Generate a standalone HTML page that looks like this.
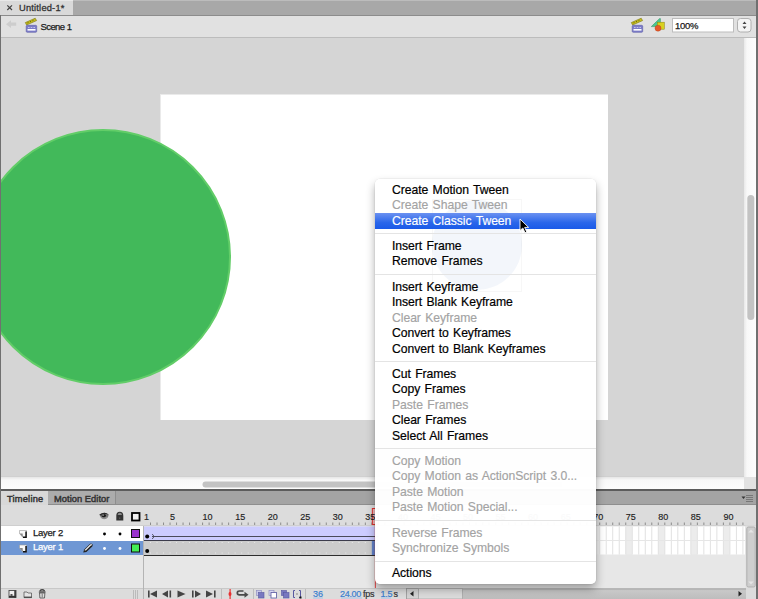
<!DOCTYPE html>
<html><head><meta charset="utf-8">
<style>
*{margin:0;padding:0;box-sizing:border-box}
html,body{width:758px;height:599px;overflow:hidden;background:#d5d5d5;font-family:"Liberation Sans",sans-serif;position:relative}
.a{position:absolute}
.t{position:absolute;white-space:nowrap;line-height:1}
/* top */
#tabbar{left:0;top:0;width:758px;height:16px;background:#a8a8a8;border-top:1px solid #bcbcbc;border-bottom:1px solid #8c8c8c}
#doctab{left:0;top:0;width:73px;height:15px;background:#d9d9d9;border-top:1px solid #e8e8e8}
#scenebar{left:0;top:16px;width:758px;height:22px;background:#e1e1e1;border-bottom:1px solid #bcbcbc}
#stagearea{left:1px;top:38px;width:744px;height:438px;background:#d5d5d5;overflow:hidden}
#stage{left:159px;top:56px;width:448px;height:326px;background:#fff;box-shadow:inset 1px 1px 0 #eaeaea}
#circle{left:-26.5px;top:91px;width:256px;height:256px;border-radius:50%;background:#42b95a;border:2px solid #62cd68}
#leftline{left:0;top:15px;width:1px;height:584px;background:#707070}
#rightline{left:756px;top:0;width:2px;height:599px;background:#707070}
#vscroll{left:745px;top:38px;width:11px;height:451px;background:#f7f7f7;border-left:1px solid #e2e2e2}
#hscroll{left:1px;top:476px;width:744px;height:13px;background:#fcfcfc;border-top:1px solid #d0d0d0}
#tlsep{left:0;top:489px;width:758px;height:2px;background:#5c5c5c}
#tltabs{left:1px;top:491px;width:755px;height:14px;background:#a4a4a4;border-bottom:1px solid #8e8e8e}
#tltab1{left:0;top:0;width:47px;height:14px;background:#d8d8d8}
#tltab2{left:47px;top:0;width:68px;height:13px;background:#acacac;border-right:1px solid #8e8e8e}
#tlhead{left:1px;top:505px;width:755px;height:21px;background:#dcdcdc;border-bottom:1px solid #cfcfcf}
#tlbody{left:1px;top:526px;width:755px;height:62px;background:#e7e7e7}
#tlfoot{left:1px;top:588px;width:755px;height:11px;background:#dcdcdc;border-top:1px solid #c8c8c8}
#framediv{left:143px;top:526px;width:1px;height:73px;background:#b4b4b4}
#row2{left:1px;top:526px;width:142px;height:15px;background:#fff}
#row1{left:1px;top:541px;width:142px;height:14px;background:#6f97d4}
/* menu */
#menu{left:375px;top:179px;width:221px;height:405px;background:rgba(255,255,255,0.975);border-radius:5px;box-shadow:0 0 0 0.5px rgba(0,0,0,0.07),0 5px 10px rgba(0,0,0,0.32)}
.mi{position:absolute;left:17px;font-size:12.2px;letter-spacing:-0.05px;word-spacing:1px;color:#000;white-space:nowrap;line-height:15px;-webkit-text-stroke:0.2px #000}
.dis{color:#a3a3a3;-webkit-text-stroke:0.15px #a3a3a3}
.hl{left:0;width:221px;height:16px;background:linear-gradient(#6b91f1,#2a66ea 60%,#1a5ae8)}
.sep{position:absolute;left:0;width:221px;height:1px;background:#e4e4e4}
.rl{top:512.5px;font-size:9px;color:#222;-webkit-text-stroke:0.15px currentColor}
.st{top:589.5px;font-size:9px;color:#333;-webkit-text-stroke:0.2px currentColor}
.sm{font-size:9.5px;color:#1a1a1a;-webkit-text-stroke:0.25px currentColor}
</style></head><body>
<div id="tabbar" class="a"></div>
<div id="doctab" class="a"></div>
<svg class="a" style="left:6px;top:4px" width="8" height="8"><path d="M1.3 1.3 L6 6 M6 1.3 L1.3 6" stroke="#444" stroke-width="1.2"/></svg>
<div class="t sm" style="left:19px;top:4px;font-size:9.3px;-webkit-text-stroke:0.3px #333;letter-spacing:0.2px;color:#333">Untitled-1*</div>
<div id="scenebar" class="a"></div>
<div class="t sm" style="left:40.5px;top:21.8px;letter-spacing:-0.6px;word-spacing:0.3px">Scene 1</div>

<svg class="a" style="left:0;top:0" width="758" height="40">
  <!-- back arrow -->
  <path d="M6 24.2 L11 20.3 L11 22.6 L16.2 22.6 L16.2 25.8 L11 25.8 L11 28.1 Z" fill="#cdcdcd"/>
  <!-- clapper left -->
  <g transform="translate(25,18)">
    <path d="M0.3 4.6 L10.2 0.2 L11.6 2.6 L1.6 7 Z" fill="#c4bc1c" stroke="#7a7410" stroke-width="0.6"/><path d="M2.5 4.9 L3.4 4.5 M5 3.8 L5.9 3.4 M7.5 2.7 L8.4 2.3" stroke="#5a5608" stroke-width="0.9"/>
    <rect x="1.2" y="7.3" width="10.5" height="7" rx="1" fill="#7c7cc8" stroke="#5c5ca8" stroke-width="0.6"/>
    <rect x="2.5" y="11" width="8" height="1.6" fill="#fff"/>
    <rect x="3" y="9" width="1.6" height="0.9" fill="#c8c8f0"/><rect x="5.7" y="9" width="1.6" height="0.9" fill="#c8c8f0"/><rect x="8.4" y="9" width="1.6" height="0.9" fill="#c8c8f0"/>
  </g>
  <!-- clapper right -->
  <g transform="translate(631,18)">
    <path d="M0.3 4.6 L10.2 0.2 L11.6 2.6 L1.6 7 Z" fill="#c4bc1c" stroke="#7a7410" stroke-width="0.6"/><path d="M2.5 4.9 L3.4 4.5 M5 3.8 L5.9 3.4 M7.5 2.7 L8.4 2.3" stroke="#5a5608" stroke-width="0.9"/>
    <rect x="1.2" y="7.3" width="10.5" height="7" rx="1" fill="#7c7cc8" stroke="#5c5ca8" stroke-width="0.6"/>
    <rect x="2.5" y="11" width="8" height="1.6" fill="#fff"/>
    <rect x="3" y="9" width="1.6" height="0.9" fill="#c8c8f0"/><rect x="5.7" y="9" width="1.6" height="0.9" fill="#c8c8f0"/><rect x="8.4" y="9" width="1.6" height="0.9" fill="#c8c8f0"/>
  </g>
  <!-- symbol icon -->
  <g transform="translate(651,18)">
    <path d="M0.3 8.6 L8.6 0.6 L9.4 0.6 L9.4 8.6 Z" fill="#4cc890" stroke="#2a8a60" stroke-width="0.5"/>
    <rect x="6.3" y="4.2" width="7" height="7" fill="#d8d020" stroke="#8a8410" stroke-width="0.5"/>
    <circle cx="7" cy="10.2" r="3" fill="#e8582a" stroke="#b03a10" stroke-width="0.4"/>
  </g>
  <!-- zoom box -->
  <rect x="672.5" y="18.5" width="61" height="13.5" fill="#fff" stroke="#bdbdbd"/>
  <rect x="737.5" y="18.5" width="13.5" height="13.5" rx="3" fill="#f4f4f4" stroke="#b0b0b0"/>
  <path d="M742.5 24 L744.5 21.5 L746.5 24 Z M742.5 26.5 L744.5 29 L746.5 26.5 Z" fill="#444"/>
</svg>
<div class="t sm" style="left:675px;top:21.2px;letter-spacing:-0.3px">100%</div>
<div id="stagearea" class="a">
  <div id="stage" class="a"></div>
  <div id="circle" class="a"></div>
</div>
<div id="vscroll" class="a"></div>
<div id="hscroll" class="a"></div>
<div id="tlsep" class="a"></div>
<div id="tltabs" class="a"><div id="tltab1" class="a"></div><div id="tltab2" class="a"></div></div>
<div class="t sm" style="left:7px;top:494.5px;font-size:9.3px;color:#333;letter-spacing:0.2px;-webkit-text-stroke:0.45px #333">Timeline</div>
<div class="t sm" style="left:54px;top:494.5px;font-size:9.3px;color:#333;letter-spacing:0.05px;-webkit-text-stroke:0.45px #333">Motion Editor</div>
<div id="tlhead" class="a"></div>
<div id="tlbody" class="a"></div>
<div id="tlfoot" class="a"></div>
<div id="row2" class="a"></div>
<div id="row1" class="a"></div>
<div class="t sm" style="left:33px;top:528.4px;letter-spacing:-0.25px">Layer 2</div>
<div class="t sm" style="left:33px;top:542.4px;letter-spacing:-0.25px;color:#fff">Layer 1</div>
<div id="framediv" class="a"></div>
<!--TL--><svg class="a" style="left:0;top:0" width="758" height="599"><rect x="378.36" y="526.5" width="6.51" height="28" fill="#ffffff"/><rect x="384.87" y="526.5" width="6.51" height="28" fill="#ffffff"/><rect x="391.38" y="526.5" width="6.51" height="28" fill="#ffffff"/><rect x="397.89" y="526.5" width="6.51" height="28" fill="#ececec"/><rect x="404.40" y="526.5" width="6.51" height="28" fill="#ffffff"/><rect x="410.91" y="526.5" width="6.51" height="28" fill="#ffffff"/><rect x="417.42" y="526.5" width="6.51" height="28" fill="#ffffff"/><rect x="423.93" y="526.5" width="6.51" height="28" fill="#ffffff"/><rect x="430.44" y="526.5" width="6.51" height="28" fill="#ececec"/><rect x="436.95" y="526.5" width="6.51" height="28" fill="#ffffff"/><rect x="443.46" y="526.5" width="6.51" height="28" fill="#ffffff"/><rect x="449.97" y="526.5" width="6.51" height="28" fill="#ffffff"/><rect x="456.48" y="526.5" width="6.51" height="28" fill="#ffffff"/><rect x="462.99" y="526.5" width="6.51" height="28" fill="#ececec"/><rect x="469.50" y="526.5" width="6.51" height="28" fill="#ffffff"/><rect x="476.01" y="526.5" width="6.51" height="28" fill="#ffffff"/><rect x="482.52" y="526.5" width="6.51" height="28" fill="#ffffff"/><rect x="489.03" y="526.5" width="6.51" height="28" fill="#ffffff"/><rect x="495.54" y="526.5" width="6.51" height="28" fill="#ececec"/><rect x="502.05" y="526.5" width="6.51" height="28" fill="#ffffff"/><rect x="508.56" y="526.5" width="6.51" height="28" fill="#ffffff"/><rect x="515.07" y="526.5" width="6.51" height="28" fill="#ffffff"/><rect x="521.58" y="526.5" width="6.51" height="28" fill="#ffffff"/><rect x="528.09" y="526.5" width="6.51" height="28" fill="#ececec"/><rect x="534.60" y="526.5" width="6.51" height="28" fill="#ffffff"/><rect x="541.11" y="526.5" width="6.51" height="28" fill="#ffffff"/><rect x="547.62" y="526.5" width="6.51" height="28" fill="#ffffff"/><rect x="554.13" y="526.5" width="6.51" height="28" fill="#ffffff"/><rect x="560.64" y="526.5" width="6.51" height="28" fill="#ececec"/><rect x="567.15" y="526.5" width="6.51" height="28" fill="#ffffff"/><rect x="573.66" y="526.5" width="6.51" height="28" fill="#ffffff"/><rect x="580.17" y="526.5" width="6.51" height="28" fill="#ffffff"/><rect x="586.68" y="526.5" width="6.51" height="28" fill="#ffffff"/><rect x="593.19" y="526.5" width="6.51" height="28" fill="#ececec"/><rect x="599.70" y="526.5" width="6.51" height="28" fill="#ffffff"/><rect x="606.21" y="526.5" width="6.51" height="28" fill="#ffffff"/><rect x="612.72" y="526.5" width="6.51" height="28" fill="#ffffff"/><rect x="619.23" y="526.5" width="6.51" height="28" fill="#ffffff"/><rect x="625.74" y="526.5" width="6.51" height="28" fill="#ececec"/><rect x="632.25" y="526.5" width="6.51" height="28" fill="#ffffff"/><rect x="638.76" y="526.5" width="6.51" height="28" fill="#ffffff"/><rect x="645.27" y="526.5" width="6.51" height="28" fill="#ffffff"/><rect x="651.78" y="526.5" width="6.51" height="28" fill="#ffffff"/><rect x="658.29" y="526.5" width="6.51" height="28" fill="#ececec"/><rect x="664.80" y="526.5" width="6.51" height="28" fill="#ffffff"/><rect x="671.31" y="526.5" width="6.51" height="28" fill="#ffffff"/><rect x="677.82" y="526.5" width="6.51" height="28" fill="#ffffff"/><rect x="684.33" y="526.5" width="6.51" height="28" fill="#ffffff"/><rect x="690.84" y="526.5" width="6.51" height="28" fill="#ececec"/><rect x="697.35" y="526.5" width="6.51" height="28" fill="#ffffff"/><rect x="703.86" y="526.5" width="6.51" height="28" fill="#ffffff"/><rect x="710.37" y="526.5" width="6.51" height="28" fill="#ffffff"/><rect x="716.88" y="526.5" width="6.51" height="28" fill="#ffffff"/><rect x="723.39" y="526.5" width="6.51" height="28" fill="#ececec"/><rect x="729.90" y="526.5" width="6.51" height="28" fill="#ffffff"/><rect x="736.41" y="526.5" width="6.51" height="28" fill="#ffffff"/><rect x="742.92" y="526.5" width="2.08" height="28" fill="#ffffff"/><rect x="377.86" y="526.5" width="1" height="28" fill="#e2e2e2"/><rect x="384.37" y="526.5" width="1" height="28" fill="#e2e2e2"/><rect x="390.88" y="526.5" width="1" height="28" fill="#e2e2e2"/><rect x="397.39" y="526.5" width="1" height="28" fill="#e2e2e2"/><rect x="403.90" y="526.5" width="1" height="28" fill="#e2e2e2"/><rect x="410.41" y="526.5" width="1" height="28" fill="#e2e2e2"/><rect x="416.92" y="526.5" width="1" height="28" fill="#e2e2e2"/><rect x="423.43" y="526.5" width="1" height="28" fill="#e2e2e2"/><rect x="429.94" y="526.5" width="1" height="28" fill="#e2e2e2"/><rect x="436.45" y="526.5" width="1" height="28" fill="#e2e2e2"/><rect x="442.96" y="526.5" width="1" height="28" fill="#e2e2e2"/><rect x="449.47" y="526.5" width="1" height="28" fill="#e2e2e2"/><rect x="455.98" y="526.5" width="1" height="28" fill="#e2e2e2"/><rect x="462.49" y="526.5" width="1" height="28" fill="#e2e2e2"/><rect x="469.00" y="526.5" width="1" height="28" fill="#e2e2e2"/><rect x="475.51" y="526.5" width="1" height="28" fill="#e2e2e2"/><rect x="482.02" y="526.5" width="1" height="28" fill="#e2e2e2"/><rect x="488.53" y="526.5" width="1" height="28" fill="#e2e2e2"/><rect x="495.04" y="526.5" width="1" height="28" fill="#e2e2e2"/><rect x="501.55" y="526.5" width="1" height="28" fill="#e2e2e2"/><rect x="508.06" y="526.5" width="1" height="28" fill="#e2e2e2"/><rect x="514.57" y="526.5" width="1" height="28" fill="#e2e2e2"/><rect x="521.08" y="526.5" width="1" height="28" fill="#e2e2e2"/><rect x="527.59" y="526.5" width="1" height="28" fill="#e2e2e2"/><rect x="534.10" y="526.5" width="1" height="28" fill="#e2e2e2"/><rect x="540.61" y="526.5" width="1" height="28" fill="#e2e2e2"/><rect x="547.12" y="526.5" width="1" height="28" fill="#e2e2e2"/><rect x="553.63" y="526.5" width="1" height="28" fill="#e2e2e2"/><rect x="560.14" y="526.5" width="1" height="28" fill="#e2e2e2"/><rect x="566.65" y="526.5" width="1" height="28" fill="#e2e2e2"/><rect x="573.16" y="526.5" width="1" height="28" fill="#e2e2e2"/><rect x="579.67" y="526.5" width="1" height="28" fill="#e2e2e2"/><rect x="586.18" y="526.5" width="1" height="28" fill="#e2e2e2"/><rect x="592.69" y="526.5" width="1" height="28" fill="#e2e2e2"/><rect x="599.20" y="526.5" width="1" height="28" fill="#e2e2e2"/><rect x="605.71" y="526.5" width="1" height="28" fill="#e2e2e2"/><rect x="612.22" y="526.5" width="1" height="28" fill="#e2e2e2"/><rect x="618.73" y="526.5" width="1" height="28" fill="#e2e2e2"/><rect x="625.24" y="526.5" width="1" height="28" fill="#e2e2e2"/><rect x="631.75" y="526.5" width="1" height="28" fill="#e2e2e2"/><rect x="638.26" y="526.5" width="1" height="28" fill="#e2e2e2"/><rect x="644.77" y="526.5" width="1" height="28" fill="#e2e2e2"/><rect x="651.28" y="526.5" width="1" height="28" fill="#e2e2e2"/><rect x="657.79" y="526.5" width="1" height="28" fill="#e2e2e2"/><rect x="664.30" y="526.5" width="1" height="28" fill="#e2e2e2"/><rect x="670.81" y="526.5" width="1" height="28" fill="#e2e2e2"/><rect x="677.32" y="526.5" width="1" height="28" fill="#e2e2e2"/><rect x="683.83" y="526.5" width="1" height="28" fill="#e2e2e2"/><rect x="690.34" y="526.5" width="1" height="28" fill="#e2e2e2"/><rect x="696.85" y="526.5" width="1" height="28" fill="#e2e2e2"/><rect x="703.36" y="526.5" width="1" height="28" fill="#e2e2e2"/><rect x="709.87" y="526.5" width="1" height="28" fill="#e2e2e2"/><rect x="716.38" y="526.5" width="1" height="28" fill="#e2e2e2"/><rect x="722.89" y="526.5" width="1" height="28" fill="#e2e2e2"/><rect x="729.40" y="526.5" width="1" height="28" fill="#e2e2e2"/><rect x="735.91" y="526.5" width="1" height="28" fill="#e2e2e2"/><rect x="742.42" y="526.5" width="1" height="28" fill="#e2e2e2"/><rect x="378.36" y="540" width="366.64" height="1" fill="#e6e6e6"/><rect x="144.0" y="526.5" width="234.36" height="14" fill="#ccccff"/><rect x="144.0" y="540" width="234.36" height="1" fill="#3c3c4c"/><rect x="152.0" y="536" width="226.36" height="1" fill="#4a4a5a"/><path d="M152.2 534 L154.2 536.5 L152.2 539" stroke="#4a4a5a" stroke-width="0.9" fill="none"/><circle cx="147.2" cy="536.6" r="2" fill="#000"/><rect x="144.0" y="541" width="234.36" height="14" fill="#cccccc"/><rect x="144.0" y="555" width="234.36" height="1" fill="#2e2e2e"/><rect x="150.01" y="542" width="1" height="1" fill="#e8e8e8"/><rect x="150.01" y="552.5" width="1" height="1" fill="#e8e8e8"/><rect x="156.52" y="542" width="1" height="1" fill="#e8e8e8"/><rect x="156.52" y="552.5" width="1" height="1" fill="#e8e8e8"/><rect x="163.03" y="542" width="1" height="1" fill="#e8e8e8"/><rect x="163.03" y="552.5" width="1" height="1" fill="#e8e8e8"/><rect x="169.54" y="542" width="1" height="1" fill="#e8e8e8"/><rect x="169.54" y="552.5" width="1" height="1" fill="#e8e8e8"/><rect x="176.05" y="542" width="1" height="1" fill="#e8e8e8"/><rect x="176.05" y="552.5" width="1" height="1" fill="#e8e8e8"/><rect x="182.56" y="542" width="1" height="1" fill="#e8e8e8"/><rect x="182.56" y="552.5" width="1" height="1" fill="#e8e8e8"/><rect x="189.07" y="542" width="1" height="1" fill="#e8e8e8"/><rect x="189.07" y="552.5" width="1" height="1" fill="#e8e8e8"/><rect x="195.58" y="542" width="1" height="1" fill="#e8e8e8"/><rect x="195.58" y="552.5" width="1" height="1" fill="#e8e8e8"/><rect x="202.09" y="542" width="1" height="1" fill="#e8e8e8"/><rect x="202.09" y="552.5" width="1" height="1" fill="#e8e8e8"/><rect x="208.60" y="542" width="1" height="1" fill="#e8e8e8"/><rect x="208.60" y="552.5" width="1" height="1" fill="#e8e8e8"/><rect x="215.11" y="542" width="1" height="1" fill="#e8e8e8"/><rect x="215.11" y="552.5" width="1" height="1" fill="#e8e8e8"/><rect x="221.62" y="542" width="1" height="1" fill="#e8e8e8"/><rect x="221.62" y="552.5" width="1" height="1" fill="#e8e8e8"/><rect x="228.13" y="542" width="1" height="1" fill="#e8e8e8"/><rect x="228.13" y="552.5" width="1" height="1" fill="#e8e8e8"/><rect x="234.64" y="542" width="1" height="1" fill="#e8e8e8"/><rect x="234.64" y="552.5" width="1" height="1" fill="#e8e8e8"/><rect x="241.15" y="542" width="1" height="1" fill="#e8e8e8"/><rect x="241.15" y="552.5" width="1" height="1" fill="#e8e8e8"/><rect x="247.66" y="542" width="1" height="1" fill="#e8e8e8"/><rect x="247.66" y="552.5" width="1" height="1" fill="#e8e8e8"/><rect x="254.17" y="542" width="1" height="1" fill="#e8e8e8"/><rect x="254.17" y="552.5" width="1" height="1" fill="#e8e8e8"/><rect x="260.68" y="542" width="1" height="1" fill="#e8e8e8"/><rect x="260.68" y="552.5" width="1" height="1" fill="#e8e8e8"/><rect x="267.19" y="542" width="1" height="1" fill="#e8e8e8"/><rect x="267.19" y="552.5" width="1" height="1" fill="#e8e8e8"/><rect x="273.70" y="542" width="1" height="1" fill="#e8e8e8"/><rect x="273.70" y="552.5" width="1" height="1" fill="#e8e8e8"/><rect x="280.21" y="542" width="1" height="1" fill="#e8e8e8"/><rect x="280.21" y="552.5" width="1" height="1" fill="#e8e8e8"/><rect x="286.72" y="542" width="1" height="1" fill="#e8e8e8"/><rect x="286.72" y="552.5" width="1" height="1" fill="#e8e8e8"/><rect x="293.23" y="542" width="1" height="1" fill="#e8e8e8"/><rect x="293.23" y="552.5" width="1" height="1" fill="#e8e8e8"/><rect x="299.74" y="542" width="1" height="1" fill="#e8e8e8"/><rect x="299.74" y="552.5" width="1" height="1" fill="#e8e8e8"/><rect x="306.25" y="542" width="1" height="1" fill="#e8e8e8"/><rect x="306.25" y="552.5" width="1" height="1" fill="#e8e8e8"/><rect x="312.76" y="542" width="1" height="1" fill="#e8e8e8"/><rect x="312.76" y="552.5" width="1" height="1" fill="#e8e8e8"/><rect x="319.27" y="542" width="1" height="1" fill="#e8e8e8"/><rect x="319.27" y="552.5" width="1" height="1" fill="#e8e8e8"/><rect x="325.78" y="542" width="1" height="1" fill="#e8e8e8"/><rect x="325.78" y="552.5" width="1" height="1" fill="#e8e8e8"/><rect x="332.29" y="542" width="1" height="1" fill="#e8e8e8"/><rect x="332.29" y="552.5" width="1" height="1" fill="#e8e8e8"/><rect x="338.80" y="542" width="1" height="1" fill="#e8e8e8"/><rect x="338.80" y="552.5" width="1" height="1" fill="#e8e8e8"/><rect x="345.31" y="542" width="1" height="1" fill="#e8e8e8"/><rect x="345.31" y="552.5" width="1" height="1" fill="#e8e8e8"/><rect x="351.82" y="542" width="1" height="1" fill="#e8e8e8"/><rect x="351.82" y="552.5" width="1" height="1" fill="#e8e8e8"/><rect x="358.33" y="542" width="1" height="1" fill="#e8e8e8"/><rect x="358.33" y="552.5" width="1" height="1" fill="#e8e8e8"/><rect x="364.84" y="542" width="1" height="1" fill="#e8e8e8"/><rect x="364.84" y="552.5" width="1" height="1" fill="#e8e8e8"/><circle cx="147.2" cy="551" r="2" fill="#000"/><rect x="371.85" y="541" width="6.51" height="14" fill="#6080c8"/><rect x="150.01" y="522.5" width="1" height="2.5" fill="#8c8c8c"/><rect x="156.52" y="522.5" width="1" height="2.5" fill="#8c8c8c"/><rect x="163.03" y="522.5" width="1" height="2.5" fill="#8c8c8c"/><rect x="169.54" y="522.5" width="1" height="2.5" fill="#8c8c8c"/><rect x="176.05" y="522.5" width="1" height="2.5" fill="#8c8c8c"/><rect x="182.56" y="522.5" width="1" height="2.5" fill="#8c8c8c"/><rect x="189.07" y="522.5" width="1" height="2.5" fill="#8c8c8c"/><rect x="195.58" y="522.5" width="1" height="2.5" fill="#8c8c8c"/><rect x="202.09" y="522.5" width="1" height="2.5" fill="#8c8c8c"/><rect x="208.60" y="522.5" width="1" height="2.5" fill="#8c8c8c"/><rect x="215.11" y="522.5" width="1" height="2.5" fill="#8c8c8c"/><rect x="221.62" y="522.5" width="1" height="2.5" fill="#8c8c8c"/><rect x="228.13" y="522.5" width="1" height="2.5" fill="#8c8c8c"/><rect x="234.64" y="522.5" width="1" height="2.5" fill="#8c8c8c"/><rect x="241.15" y="522.5" width="1" height="2.5" fill="#8c8c8c"/><rect x="247.66" y="522.5" width="1" height="2.5" fill="#8c8c8c"/><rect x="254.17" y="522.5" width="1" height="2.5" fill="#8c8c8c"/><rect x="260.68" y="522.5" width="1" height="2.5" fill="#8c8c8c"/><rect x="267.19" y="522.5" width="1" height="2.5" fill="#8c8c8c"/><rect x="273.70" y="522.5" width="1" height="2.5" fill="#8c8c8c"/><rect x="280.21" y="522.5" width="1" height="2.5" fill="#8c8c8c"/><rect x="286.72" y="522.5" width="1" height="2.5" fill="#8c8c8c"/><rect x="293.23" y="522.5" width="1" height="2.5" fill="#8c8c8c"/><rect x="299.74" y="522.5" width="1" height="2.5" fill="#8c8c8c"/><rect x="306.25" y="522.5" width="1" height="2.5" fill="#8c8c8c"/><rect x="312.76" y="522.5" width="1" height="2.5" fill="#8c8c8c"/><rect x="319.27" y="522.5" width="1" height="2.5" fill="#8c8c8c"/><rect x="325.78" y="522.5" width="1" height="2.5" fill="#8c8c8c"/><rect x="332.29" y="522.5" width="1" height="2.5" fill="#8c8c8c"/><rect x="338.80" y="522.5" width="1" height="2.5" fill="#8c8c8c"/><rect x="345.31" y="522.5" width="1" height="2.5" fill="#8c8c8c"/><rect x="351.82" y="522.5" width="1" height="2.5" fill="#8c8c8c"/><rect x="358.33" y="522.5" width="1" height="2.5" fill="#8c8c8c"/><rect x="364.84" y="522.5" width="1" height="2.5" fill="#8c8c8c"/><rect x="371.35" y="522.5" width="1" height="2.5" fill="#8c8c8c"/><rect x="377.86" y="522.5" width="1" height="2.5" fill="#8c8c8c"/><rect x="384.37" y="522.5" width="1" height="2.5" fill="#8c8c8c"/><rect x="390.88" y="522.5" width="1" height="2.5" fill="#8c8c8c"/><rect x="397.39" y="522.5" width="1" height="2.5" fill="#8c8c8c"/><rect x="403.90" y="522.5" width="1" height="2.5" fill="#8c8c8c"/><rect x="410.41" y="522.5" width="1" height="2.5" fill="#8c8c8c"/><rect x="416.92" y="522.5" width="1" height="2.5" fill="#8c8c8c"/><rect x="423.43" y="522.5" width="1" height="2.5" fill="#8c8c8c"/><rect x="429.94" y="522.5" width="1" height="2.5" fill="#8c8c8c"/><rect x="436.45" y="522.5" width="1" height="2.5" fill="#8c8c8c"/><rect x="442.96" y="522.5" width="1" height="2.5" fill="#8c8c8c"/><rect x="449.47" y="522.5" width="1" height="2.5" fill="#8c8c8c"/><rect x="455.98" y="522.5" width="1" height="2.5" fill="#8c8c8c"/><rect x="462.49" y="522.5" width="1" height="2.5" fill="#8c8c8c"/><rect x="469.00" y="522.5" width="1" height="2.5" fill="#8c8c8c"/><rect x="475.51" y="522.5" width="1" height="2.5" fill="#8c8c8c"/><rect x="482.02" y="522.5" width="1" height="2.5" fill="#8c8c8c"/><rect x="488.53" y="522.5" width="1" height="2.5" fill="#8c8c8c"/><rect x="495.04" y="522.5" width="1" height="2.5" fill="#8c8c8c"/><rect x="501.55" y="522.5" width="1" height="2.5" fill="#8c8c8c"/><rect x="508.06" y="522.5" width="1" height="2.5" fill="#8c8c8c"/><rect x="514.57" y="522.5" width="1" height="2.5" fill="#8c8c8c"/><rect x="521.08" y="522.5" width="1" height="2.5" fill="#8c8c8c"/><rect x="527.59" y="522.5" width="1" height="2.5" fill="#8c8c8c"/><rect x="534.10" y="522.5" width="1" height="2.5" fill="#8c8c8c"/><rect x="540.61" y="522.5" width="1" height="2.5" fill="#8c8c8c"/><rect x="547.12" y="522.5" width="1" height="2.5" fill="#8c8c8c"/><rect x="553.63" y="522.5" width="1" height="2.5" fill="#8c8c8c"/><rect x="560.14" y="522.5" width="1" height="2.5" fill="#8c8c8c"/><rect x="566.65" y="522.5" width="1" height="2.5" fill="#8c8c8c"/><rect x="573.16" y="522.5" width="1" height="2.5" fill="#8c8c8c"/><rect x="579.67" y="522.5" width="1" height="2.5" fill="#8c8c8c"/><rect x="586.18" y="522.5" width="1" height="2.5" fill="#8c8c8c"/><rect x="592.69" y="522.5" width="1" height="2.5" fill="#8c8c8c"/><rect x="599.20" y="522.5" width="1" height="2.5" fill="#8c8c8c"/><rect x="605.71" y="522.5" width="1" height="2.5" fill="#8c8c8c"/><rect x="612.22" y="522.5" width="1" height="2.5" fill="#8c8c8c"/><rect x="618.73" y="522.5" width="1" height="2.5" fill="#8c8c8c"/><rect x="625.24" y="522.5" width="1" height="2.5" fill="#8c8c8c"/><rect x="631.75" y="522.5" width="1" height="2.5" fill="#8c8c8c"/><rect x="638.26" y="522.5" width="1" height="2.5" fill="#8c8c8c"/><rect x="644.77" y="522.5" width="1" height="2.5" fill="#8c8c8c"/><rect x="651.28" y="522.5" width="1" height="2.5" fill="#8c8c8c"/><rect x="657.79" y="522.5" width="1" height="2.5" fill="#8c8c8c"/><rect x="664.30" y="522.5" width="1" height="2.5" fill="#8c8c8c"/><rect x="670.81" y="522.5" width="1" height="2.5" fill="#8c8c8c"/><rect x="677.32" y="522.5" width="1" height="2.5" fill="#8c8c8c"/><rect x="683.83" y="522.5" width="1" height="2.5" fill="#8c8c8c"/><rect x="690.34" y="522.5" width="1" height="2.5" fill="#8c8c8c"/><rect x="696.85" y="522.5" width="1" height="2.5" fill="#8c8c8c"/><rect x="703.36" y="522.5" width="1" height="2.5" fill="#8c8c8c"/><rect x="709.87" y="522.5" width="1" height="2.5" fill="#8c8c8c"/><rect x="716.38" y="522.5" width="1" height="2.5" fill="#8c8c8c"/><rect x="722.89" y="522.5" width="1" height="2.5" fill="#8c8c8c"/><rect x="729.40" y="522.5" width="1" height="2.5" fill="#8c8c8c"/><rect x="735.91" y="522.5" width="1" height="2.5" fill="#8c8c8c"/><rect x="742.42" y="522.5" width="1" height="2.5" fill="#8c8c8c"/><rect x="372.35" y="508.5" width="6" height="16" fill="#f0b8b8" stroke="#e03030" stroke-width="1"/><rect x="374.85" y="524" width="1" height="64" fill="#e04040"/></svg><div class="t rl" style="left:144.00px">1</div><div class="t rl" style="left:170.04px">5</div><div class="t rl" style="left:202.59px">10</div><div class="t rl" style="left:235.14px">15</div><div class="t rl" style="left:267.69px">20</div><div class="t rl" style="left:300.24px">25</div><div class="t rl" style="left:332.79px">30</div><div class="t rl" style="left:365.34px">35</div><div class="t rl" style="left:397.89px">40</div><div class="t rl" style="left:430.44px">45</div><div class="t rl" style="left:462.99px">50</div><div class="t rl" style="left:495.54px">55</div><div class="t rl" style="left:528.09px">60</div><div class="t rl" style="left:560.64px">65</div><div class="t rl" style="left:593.19px">70</div><div class="t rl" style="left:625.74px">75</div><div class="t rl" style="left:658.29px">80</div><div class="t rl" style="left:690.84px">85</div><div class="t rl" style="left:723.39px">90</div><!--/TL-->
<svg class="a" style="left:0;top:500px" width="420" height="99">
  <!-- eye -->
  <g transform="translate(99.5,12)">
    <path d="M0 2.6 Q4.8 -0.8 9.2 2.4 Q8.6 6.8 4.6 7.2 Q1.2 6.8 0 2.6 Z" fill="#777"/>
    <path d="M0 2.6 Q4.8 -0.8 9.2 2.4 Q4.8 1.2 0.6 3.4 Z" fill="#2a2a2a"/>
    <ellipse cx="4.3" cy="3.6" rx="2.3" ry="1.6" fill="#1a1a1a"/>
    <ellipse cx="3.6" cy="3.1" rx="0.9" ry="0.5" fill="#ddd"/>
    <path d="M1.2 5.6 Q4.6 7.6 8 5.2" stroke="#9a9a9a" stroke-width="0.8" fill="none"/>
  </g>
  <!-- lock -->
  <g transform="translate(116,11.5)">
    <path d="M0.3 9 L0.3 4.2 Q0.3 0.3 3.8 0.3 Q7.3 0.3 7.3 4.2 L7.3 9 Z" fill="#333"/>
    <path d="M1.6 3.4 Q2 1.2 3.8 1.2 Q5.6 1.2 6 3.4 Z" fill="#8a8a8a"/>
    <circle cx="3.8" cy="6.6" r="0.6" fill="#777"/>
  </g>
  <!-- outline square -->
  <rect x="132" y="13" width="7.5" height="7.5" fill="#f0f0f0" stroke="#000" stroke-width="1.8"/>
  <!-- layer icons -->
  <g transform="translate(19,30)">
    <path d="M0.5 0.5 L7.5 0.5 L7.5 7.5 L4 7.5 L0.5 3.5 Z" fill="#fafafa" stroke="#999" stroke-width="0.6"/>
    <path d="M6.3 1.5 L7.8 1.5 L7.8 8 L4 8 L4 6.6 L6.3 6.6 Z" fill="#111"/>
    <path d="M0.5 3.5 L3.6 3.5 L4 7.5 Z" fill="#888"/>
  </g>
  <g transform="translate(19,44.5)">
    <path d="M0.5 0.5 L7.5 0.5 L7.5 7.5 L4 7.5 L0.5 3.5 Z" fill="#fafafa" stroke="#999" stroke-width="0.6"/>
    <path d="M6.3 1.5 L7.8 1.5 L7.8 8 L4 8 L4 6.6 L6.3 6.6 Z" fill="#111"/>
    <path d="M0.5 3.5 L3.6 3.5 L4 7.5 Z" fill="#888"/>
  </g>
  <!-- dots -->
  <circle cx="104.5" cy="34" r="1.45" fill="#000"/>
  <circle cx="120" cy="34" r="1.45" fill="#000"/>
  <circle cx="104.5" cy="48.5" r="1.45" fill="#fff"/>
  <circle cx="120" cy="48.5" r="1.45" fill="#fff"/>
  <!-- colour squares -->
  <rect x="131.5" y="29.5" width="8" height="8" fill="#9933cc" stroke="#111" stroke-width="1"/>
  <rect x="131.5" y="44" width="8" height="8" fill="#44ee55" stroke="#111" stroke-width="1"/>
  <!-- pencil -->
  <g transform="translate(83,43)">
    <path d="M0.2 9.6 L1.2 6.6 L6.8 1 Q8 0 9.2 1.2 Q10.2 2.4 9.2 3.4 L3.4 9 Z" fill="#222"/>
    <path d="M1.4 7.2 L6.9 1.7 Q7.8 1 8.6 1.8 L2.9 7.6 Z" fill="#f4f4f4"/>
    <ellipse cx="8.2" cy="1.8" rx="0.9" ry="0.6" fill="#ddd" transform="rotate(-45 8.2 1.8)"/>
  </g>
  <!-- footer icons left -->
  <g transform="translate(8.5,90)">
    <rect x="0.5" y="0.5" width="7" height="7" fill="#f0f0f0" stroke="#4a4a4a" stroke-width="0.9"/>
    <rect x="5.8" y="0.5" width="1.6" height="7" fill="#333"/>
    <rect x="0.5" y="5.8" width="7" height="1.6" fill="#333"/>
    <rect x="2" y="4" width="2" height="2" fill="#555"/>
  </g>
  <g transform="translate(23.5,91)">
    <path d="M0.5 1 L3.5 1 L4.5 2 L8 2 L8 6.6 L0.5 6.6 Z" fill="#e4e4e4" stroke="#5a5a5a" stroke-width="0.8"/>
    <rect x="0.5" y="5.6" width="7.8" height="1.2" fill="#444"/>
  </g>
  <g transform="translate(38.5,89)">
    <path d="M1.2 2 Q3.7 -0.5 6.2 2" stroke="#444" stroke-width="1.2" fill="none"/>
    <rect x="0.3" y="2.2" width="6.8" height="1.6" rx="0.5" fill="#555"/>
    <path d="M1 4 L6.4 4 L6 9 L1.4 9 Z" fill="#ddd" stroke="#4a4a4a" stroke-width="0.8"/>
    <rect x="3.2" y="4.5" width="1" height="4" fill="#777"/>
  </g>
  <rect x="133" y="90" width="1" height="9" fill="#bbb"/><rect x="135" y="90" width="1" height="9" fill="#bbb"/><rect x="137" y="90" width="1" height="9" fill="#bbb"/>
  <!-- playback -->
  <g fill="#444">
    <rect x="148" y="90.5" width="1.6" height="7"/><path d="M150 94 L157 90.5 L157 97.5 Z"/>
    <path d="M162 94 L168 90.5 L168 97.5 Z"/><rect x="169.5" y="90.5" width="1.6" height="7"/>
    <path d="M177.5 90.5 L185.5 94 L177.5 97.5 Z"/>
    <rect x="192" y="90.5" width="1.6" height="7"/><path d="M195 90.5 L201 94 L195 97.5 Z"/>
    <path d="M206 90.5 L213 94 L206 97.5 Z"/><rect x="214" y="90.5" width="1.6" height="7"/>
  </g>
  <rect x="221" y="89" width="1" height="10" fill="#bdbdbd"/>
  <rect x="229.5" y="89" width="1.2" height="10" fill="#e83030"/><ellipse cx="230" cy="94" rx="1.5" ry="2" fill="#e83030"/>
  <g transform="translate(236.5,89.5)">
    <path d="M7 1.5 L3 1.5 Q0.8 1.5 0.8 3.4 Q0.8 5.3 3 5.3 L8.5 5.3" stroke="#4a4a4a" stroke-width="1.7" fill="none"/>
    <path d="M8 2.3 L12 5.3 L8 8.3 Z" fill="#4a4a4a"/>
  </g>
  <rect x="253" y="89" width="1" height="10" fill="#bdbdbd"/>
  <g transform="translate(256,90)">
    <rect x="0.5" y="0.5" width="5" height="5" fill="#c8c8e8" stroke="#8888c0" stroke-width="0.6"/>
    <rect x="2.5" y="2.5" width="5.5" height="5.5" fill="#7878c0" stroke="#5858a0" stroke-width="0.6"/>
  </g>
  <g transform="translate(268.5,90)">
    <rect x="0.5" y="0.5" width="5" height="5" fill="#d8d8f0" stroke="#8888c0" stroke-width="0.6"/>
    <rect x="2.5" y="2.5" width="5.5" height="5.5" fill="#fff" stroke="#5858a0" stroke-width="0.8"/>
  </g>
  <g transform="translate(281,90)">
    <rect x="0.5" y="0.5" width="5" height="5" fill="#7878c0" stroke="#5858a0" stroke-width="0.6"/>
    <rect x="2.5" y="2.5" width="5.5" height="5.5" fill="#7878c0" stroke="#5858a0" stroke-width="0.6"/>
  </g>
  <g transform="translate(293,90)">
    <path d="M2 0.5 L0.5 0.5 L0.5 7.5 L2 7.5 M6 0.5 L7.5 0.5 L7.5 7.5 L6 7.5" stroke="#5858a0" stroke-width="1" fill="none"/>
    <rect x="3.5" y="3.5" width="1" height="1" fill="#333"/>
    <rect x="6.5" y="6.5" width="2" height="2" fill="#111"/>
  </g>
  <rect x="305" y="89" width="1" height="10" fill="#bdbdbd"/>
</svg>
<div class="t st" style="left:313px;color:#3a7ed0">36</div>
<div class="t st" style="left:340px;color:#3a7ed0;letter-spacing:-0.3px">24.00</div>
<div class="t st" style="left:363px;letter-spacing:-0.3px">fps</div>
<div class="t st" style="left:380.5px;color:#3a7ed0;letter-spacing:-0.2px">1.5</div>
<div class="t st" style="left:393.5px">s</div>
<svg class="a" style="left:0;top:0" width="758" height="599">
  <rect x="313" y="597.5" width="10" height="1" fill="#a8c4e8"/>
  <rect x="341" y="597.5" width="21" height="1" fill="#a8c4e8"/>
  <rect x="381" y="597.5" width="10" height="1" fill="#a8c4e8"/>
</svg>


<svg class="a" style="left:0;top:0" width="758" height="599">
  <!-- stage v scrollbar -->
  <defs>
    <linearGradient id="vtr" x1="0" x2="1" y1="0" y2="0"><stop offset="0" stop-color="#e8e8e8"/><stop offset="0.25" stop-color="#f8f8f8"/><stop offset="1" stop-color="#fdfdfd"/></linearGradient>
    <linearGradient id="htr" x1="0" x2="0" y1="0" y2="1"><stop offset="0" stop-color="#e6e6e6"/><stop offset="0.25" stop-color="#f8f8f8"/><stop offset="1" stop-color="#fdfdfd"/></linearGradient>
    <linearGradient id="sbg" x1="0" x2="0" y1="0" y2="1"><stop offset="0" stop-color="#a6a6a6"/><stop offset="0.2" stop-color="#c8c8c8"/><stop offset="1" stop-color="#bdbdbd"/></linearGradient>
  </defs>
  <rect x="744" y="38" width="12" height="439" fill="url(#vtr)"/>
  <rect x="747.3" y="195" width="7" height="125" rx="3.5" fill="#c3c3c3"/>
  <rect x="1" y="477" width="743" height="12" fill="url(#htr)"/>
  <rect x="202.5" y="481.4" width="360" height="6" rx="3" fill="#c3c3c3"/>
  <rect x="744" y="477" width="12" height="12" fill="#e2e2e2"/>
  <!-- timeline tab menu icon -->
  <path d="M741.5 496.5 L745.5 496.5 L743.5 499 Z" fill="#333"/>
  <rect x="746" y="495" width="7" height="1" fill="#777"/><rect x="746" y="497" width="7" height="1" fill="#777"/><rect x="746" y="499" width="7" height="1" fill="#777"/><rect x="746" y="501" width="7" height="1" fill="#777"/>
  <!-- timeline v scroll -->
  <rect x="745.5" y="525.5" width="10.5" height="62.5" fill="#e0e0e0"/>
  <rect x="746.8" y="527" width="8.4" height="60" rx="1.5" fill="#cecece" stroke="#a6a6a6" stroke-width="0.8"/>
  <path d="M748.3 532.5 L751 529.5 L753.7 532.5 Z" fill="#e4e4e4"/>
  <path d="M748.3 581.5 L751 584.5 L753.7 581.5 Z" fill="#e4e4e4"/>
  <!-- status h scroll -->
  <rect x="406" y="588.5" width="340" height="10.5" fill="url(#sbg)"/>
  <rect x="406.5" y="588.5" width="12" height="10.5" fill="#d4d4d4" stroke="#9a9a9a" stroke-width="0.8"/>
  <path d="M413.5 591 L410 593.8 L413.5 596.6 Z" fill="#222"/>
  <rect x="418.5" y="588.5" width="44" height="10.5" fill="#dcdcdc" stroke="#a8a8a8" stroke-width="0.8"/>
  <path d="M738.5 591 L742 593.8 L738.5 596.6 Z" fill="#222"/>
  <rect x="746" y="588" width="10" height="11" fill="#dcdcdc"/>
</svg>
<div id="leftline" class="a"></div>
<div id="rightline" class="a"></div>

<div id="menu" class="a">
  <svg class="a" style="left:0;top:0" width="222" height="405">
    <circle cx="102" cy="66" r="45" fill="#3060c0" fill-opacity="0.06"/>
    <rect x="57.5" y="20.5" width="89" height="92" fill="none" stroke="#000" stroke-opacity="0.03"/>
  </svg>

  <div class="mi" style="top:4px">Create Motion Tween</div>
  <div class="mi dis" style="top:19px">Create Shape Tween</div>
  <div class="a hl" style="top:34px"></div>
  <div class="mi" style="top:35px;color:#fff;-webkit-text-stroke:0.15px #fff">Create Classic Tween</div>
  <div class="sep" style="top:54px"></div>
  <div class="mi" style="top:60px">Insert Frame</div>
  <div class="mi" style="top:75px">Remove Frames</div>
  <div class="sep" style="top:95px"></div>
  <div class="mi" style="top:101px">Insert Keyframe</div>
  <div class="mi" style="top:116px">Insert Blank Keyframe</div>
  <div class="mi dis" style="top:132px">Clear Keyframe</div>
  <div class="mi" style="top:147px">Convert to Keyframes</div>
  <div class="mi" style="top:163px">Convert to Blank Keyframes</div>
  <div class="sep" style="top:182px"></div>
  <div class="mi" style="top:188px">Cut Frames</div>
  <div class="mi" style="top:203px">Copy Frames</div>
  <div class="mi dis" style="top:219px">Paste Frames</div>
  <div class="mi" style="top:234px">Clear Frames</div>
  <div class="mi" style="top:250px">Select All Frames</div>
  <div class="sep" style="top:269px"></div>
  <div class="mi dis" style="top:275px">Copy Motion</div>
  <div class="mi dis" style="top:290px">Copy Motion as ActionScript 3.0...</div>
  <div class="mi dis" style="top:306px">Paste Motion</div>
  <div class="mi dis" style="top:321px">Paste Motion Special...</div>
  <div class="sep" style="top:341px"></div>
  <div class="mi dis" style="top:347px">Reverse Frames</div>
  <div class="mi dis" style="top:362px">Synchronize Symbols</div>
  <div class="sep" style="top:382px"></div>
  <div class="mi" style="top:387px">Actions</div>
</div>

<svg class="a" style="left:518px;top:217px" width="16" height="20">
  <path d="M2 2 L2 13.5 L4.8 11 L7 15.8 L8.8 15 L6.7 10.4 L10.6 10.4 Z" fill="#000" stroke="#fff" stroke-width="0.9" stroke-linejoin="round"/>
</svg>
</body></html>
